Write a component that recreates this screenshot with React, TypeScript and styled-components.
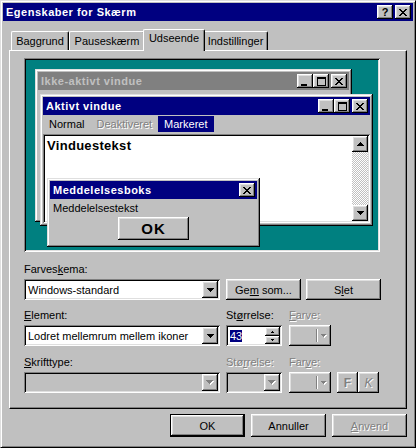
import React from 'react';
import styled, { createGlobalStyle, css } from 'styled-components';

const GlobalStyle = createGlobalStyle`
  html, body {
    margin: 0;
    padding: 0;
    background: #c0c0c0;
  }
  body {
    font-family: "Liberation Sans", Arial, sans-serif;
    font-size: 11px;
    color: #000;
  }
  * {
    box-sizing: border-box;
  }
`;

const raised = css`
  background: #c0c0c0;
  box-shadow: inset -1px -1px #000, inset 1px 1px #fff, inset -2px -2px #808080, inset 2px 2px #dfdfdf;
`;

const sunken = css`
  box-shadow: inset 1px 1px #808080, inset -1px -1px #fff, inset 2px 2px #000, inset -2px -2px #dfdfdf;
`;

const disabledText = css`
  color: #808080;
  text-shadow: 1px 1px 0 #fff;
`;

/* ---------- pixel glyphs ---------- */

const CLOSE = ['##....##', '.##..##.', '..####..', '...##...', '..####..', '.##..##.', '##....##'];
const MINIMIZE = ['.........', '.........', '.........', '.........', '.........', '.........', '.........', '######...', '######...'];
const MAXIMIZE = ['#########', '#########', '#.......#', '#.......#', '#.......#', '#.......#', '#.......#', '#.......#', '#########'];
const DOWN = ['#######', '.#####.', '..###..', '...#...'];
const UP = ['...#...', '..###..', '.#####.', '#######'];
const TINY_DOWN = ['#####', '.###.', '..#..'];
const SPIN_UP = ['.#.', '###'];
const SPIN_DOWN = ['###', '.#.'];

const GlyphSvg = styled.svg`
  display: block;
  flex: none;
`;

type GlyphProps = { rows: string[]; etched?: boolean };

function Glyph({ rows, etched }: GlyphProps) {
  const cells: [number, number][] = [];
  rows.forEach((r, y) => [...r].forEach((c, x) => { if (c === '#') cells.push([x, y]); }));
  const pad = etched ? 1 : 0;
  return (
    <GlyphSvg width={rows[0].length + pad} height={rows.length + pad} shapeRendering="crispEdges">
      {etched && cells.map(([x, y]) => <rect key={`s${x}-${y}`} x={x + 1} y={y + 1} width={1} height={1} fill="#fff" />)}
      {cells.map(([x, y]) => <rect key={`${x}-${y}`} x={x} y={y} width={1} height={1} fill={etched ? '#808080' : '#000'} />)}
    </GlyphSvg>
  );
}

/* ---------- dialog frame ---------- */

const Window = styled.div`
  width: 416px;
  height: 448px;
  overflow: hidden;
  background: #c0c0c0;
  border: 1px solid;
  border-color: #dfdfdf #000 #000 #dfdfdf;
  box-shadow: inset 1px 1px #fff, inset -1px -1px #808080;
  padding: 2px;
  display: flex;
  flex-direction: column;
`;

const TitleBar = styled.div<{ $inactive?: boolean }>`
  height: 18px;
  flex: none;
  display: flex;
  align-items: center;
  padding: 0 2px 0 3px;
  background: ${p => (p.$inactive ? '#808080' : '#000080')};
  color: ${p => (p.$inactive ? '#c0c0c0' : '#fff')};
  font-weight: bold;
  letter-spacing: 0.5px;
  white-space: nowrap;
`;

const TitleText = styled.span`
  flex: 1;
  overflow: hidden;
`;

const CaptionButton = styled.div<{ $gap?: boolean }>`
  ${raised};
  width: 16px;
  height: 14px;
  flex: none;
  margin-left: ${p => (p.$gap ? 2 : 0)}px;
  display: flex;
  align-items: center;
  justify-content: center;
  color: #000;
  font-size: 11px;
  font-weight: bold;
  letter-spacing: 0;
  line-height: 1;
  padding-top: 1px;
`;

const Body = styled.div`
  flex: 1;
  display: flex;
  flex-direction: column;
  padding: 8px 6px 0 6px;
`;

/* ---------- tabs ---------- */

const TabStrip = styled.div`
  height: 21px;
  display: flex;
  align-items: flex-end;
  padding-left: 2px;
  position: relative;
  z-index: 2;
`;

const Tab = styled.div<{ $w: number; $active?: boolean }>`
  width: ${p => p.$w}px;
  height: ${p => (p.$active ? 22 : 19)}px;
  margin: 0 ${p => (p.$active ? -2 : 0)}px ${p => (p.$active ? -1 : 0)}px;
  padding-top: ${p => (p.$active ? 2 : 3)}px;
  background: #c0c0c0;
  border-top: 1px solid #fff;
  border-left: 1px solid #fff;
  border-right: 1px solid #000;
  border-radius: 2px 2px 0 0;
  box-shadow: inset -1px 0 #808080;
  text-align: center;
  line-height: 13px;
  position: relative;
  z-index: ${p => (p.$active ? 1 : 0)};
`;

const Panel = styled.div`
  height: 359px;
  flex: none;
  border: 1px solid;
  border-color: #fff #000 #000 #fff;
  box-shadow: inset -1px -1px #808080;
  padding: 7px 0 0 14px;
`;

/* ---------- appearance preview ---------- */

const Preview = styled.div`
  ${sunken};
  width: 356px;
  height: 194px;
  padding: 2px;
`;

const Desktop = styled.div`
  position: relative;
  width: 100%;
  height: 100%;
  background: #008080;
  overflow: hidden;
`;

const MiniWindow = styled.div<{ $x: number; $y: number; $w: number; $h: number }>`
  position: absolute;
  left: ${p => p.$x}px;
  top: ${p => p.$y}px;
  width: ${p => p.$w}px;
  height: ${p => p.$h}px;
  background: #c0c0c0;
  padding: 3px;
  box-shadow: inset -1px -1px #000, inset 1px 1px #dfdfdf, inset -2px -2px #808080, inset 2px 2px #fff;
  display: flex;
  flex-direction: column;
`;

const MenuBar = styled.div`
  height: 19px;
  flex: none;
  display: flex;
  align-items: flex-start;
  padding-top: 1px;
`;

const MenuItem = styled.div<{ $state?: 'disabled' | 'selected' }>`
  height: 16px;
  line-height: 16px;
  padding: 0 6px;
  ${p => p.$state === 'disabled' && disabledText};
  ${p => p.$state === 'selected' && css`
    background: #000080;
    color: #fff;
  `};
`;

const ClientArea = styled.div`
  ${sunken};
  flex: 1;
  background: #fff;
  padding: 2px;
  display: flex;
`;

const WindowText = styled.div`
  flex: 1;
  padding: 2px 0 0 2px;
  font-size: 13px;
  font-weight: bold;
  letter-spacing: 0.3px;
  line-height: 16px;
`;

const ScrollBar = styled.div`
  width: 16px;
  display: flex;
  flex-direction: column;
`;

const ScrollButton = styled.div`
  ${raised};
  width: 16px;
  height: 16px;
  display: flex;
  align-items: center;
  justify-content: center;
`;

const ScrollTrack = styled.div`
  flex: 1;
  background: repeating-conic-gradient(#c0c0c0 0 25%, #fff 0 50%) 0 0 / 2px 2px;
`;

const MessageText = styled.div`
  margin-top: 3px;
  padding-left: 3px;
  line-height: 13px;
`;

const MessageOk = styled.div`
  ${raised};
  align-self: center;
  width: 71px;
  height: 23px;
  margin-top: 2px;
  display: flex;
  align-items: center;
  justify-content: center;
  font-size: 15px;
  font-weight: bold;
  letter-spacing: 1px;
`;

/* ---------- form controls ---------- */

const Row = styled.div<{ $top: number }>`
  display: flex;
  align-items: flex-end;
  margin-top: ${p => p.$top}px;
`;

const Field = styled.div<{ $w: number; $gap?: number }>`
  width: ${p => p.$w}px;
  margin-left: ${p => p.$gap ?? 0}px;
  display: flex;
  flex-direction: column;
`;

const Label = styled.div<{ $disabled?: boolean }>`
  height: 13px;
  line-height: 13px;
  margin-bottom: 3px;
  white-space: nowrap;
  ${p => p.$disabled && disabledText};
`;

const Combo = styled.div<{ $disabled?: boolean }>`
  ${sunken};
  height: 21px;
  padding: 2px;
  display: flex;
  align-items: center;
  background: ${p => (p.$disabled ? '#c0c0c0' : '#fff')};
`;

const ComboText = styled.div`
  flex: 1;
  padding-left: 2px;
  white-space: nowrap;
  overflow: hidden;
`;

const DropButton = styled.div`
  ${raised};
  width: 16px;
  height: 17px;
  flex: none;
  display: flex;
  align-items: center;
  justify-content: center;
`;

const Selection = styled.span`
  background: #000080;
  color: #fff;
  padding: 1px 0;
`;

const SpinColumn = styled.div`
  width: 15px;
  height: 17px;
  display: flex;
  flex-direction: column;
`;

const SpinButton = styled.div<{ $h: number }>`
  ${raised};
  height: ${p => p.$h}px;
  display: flex;
  align-items: center;
  justify-content: center;
`;

const ColorButton = styled.div`
  ${raised};
  height: 21px;
  display: flex;
  align-items: center;
  padding: 0 4px 0 4px;
`;

const Swatch = styled.div`
  flex: 1;
`;

const Separator = styled.div`
  width: 2px;
  height: 13px;
  margin-right: 3px;
  border-left: 1px solid #808080;
  border-right: 1px solid #fff;
`;

const StyleButton = styled.div<{ $gap?: number; $italic?: boolean }>`
  ${raised};
  ${disabledText};
  width: 21px;
  height: 21px;
  margin-left: ${p => p.$gap ?? 0}px;
  display: flex;
  align-items: center;
  justify-content: center;
  font-size: 12px;
  font-weight: ${p => (p.$italic ? 'normal' : 'bold')};
  font-style: ${p => (p.$italic ? 'italic' : 'normal')};
`;

const PushButton = styled.div<{ $w?: number; $h?: number; $gap?: number; $default?: boolean; $disabled?: boolean }>`
  ${raised};
  width: ${p => p.$w ?? 75}px;
  height: ${p => p.$h ?? 23}px;
  margin-left: ${p => p.$gap ?? 0}px;
  display: flex;
  align-items: center;
  justify-content: center;
  white-space: pre;
  ${p => p.$default && css`
    border: 1px solid #000;
  `};
  ${p => p.$disabled && disabledText};
`;

const Footer = styled.div`
  display: flex;
  justify-content: flex-end;
  gap: 6px;
  margin-top: 5px;
`;

export default function App() {
  return (
    <>
      <GlobalStyle />
      <Window>
        <TitleBar>
          <TitleText>Egenskaber for Skærm</TitleText>
          <CaptionButton>?</CaptionButton>
          <CaptionButton $gap><Glyph rows={CLOSE} /></CaptionButton>
        </TitleBar>

        <Body>
          <TabStrip>
            <Tab $w={58}>Baggrund</Tab>
            <Tab $w={76}>Pauseskærm</Tab>
            <Tab $w={62} $active>Udseende</Tab>
            <Tab $w={65}>Indstillinger</Tab>
          </TabStrip>

          <Panel>
            <Preview>
              <Desktop>
                <MiniWindow $x={9} $y={9} $w={317} $h={153}>
                  <TitleBar $inactive>
                    <TitleText>Ikke-aktivt vindue</TitleText>
                    <CaptionButton><Glyph rows={MINIMIZE} /></CaptionButton>
                    <CaptionButton><Glyph rows={MAXIMIZE} /></CaptionButton>
                    <CaptionButton $gap><Glyph rows={CLOSE} /></CaptionButton>
                  </TitleBar>
                </MiniWindow>

                <MiniWindow $x={14} $y={34} $w={333} $h={132}>
                  <TitleBar>
                    <TitleText>Aktivt vindue</TitleText>
                    <CaptionButton><Glyph rows={MINIMIZE} /></CaptionButton>
                    <CaptionButton><Glyph rows={MAXIMIZE} /></CaptionButton>
                    <CaptionButton $gap><Glyph rows={CLOSE} /></CaptionButton>
                  </TitleBar>
                  <MenuBar>
                    <MenuItem>Normal</MenuItem>
                    <MenuItem $state="disabled">Deaktiveret</MenuItem>
                    <MenuItem $state="selected">Markeret</MenuItem>
                  </MenuBar>
                  <ClientArea>
                    <WindowText>Vinduestekst</WindowText>
                    <ScrollBar>
                      <ScrollButton><Glyph rows={UP} /></ScrollButton>
                      <ScrollTrack />
                      <ScrollButton><Glyph rows={DOWN} /></ScrollButton>
                    </ScrollBar>
                  </ClientArea>
                </MiniWindow>

                <MiniWindow $x={21} $y={118} $w={213} $h={69}>
                  <TitleBar>
                    <TitleText>Meddelelsesboks</TitleText>
                    <CaptionButton><Glyph rows={CLOSE} /></CaptionButton>
                  </TitleBar>
                  <MessageText>Meddelelsestekst</MessageText>
                  <MessageOk>OK</MessageOk>
                </MiniWindow>
              </Desktop>
            </Preview>

            <Row $top={11}>
              <Field $w={196}>
                <Label>Farves<u>k</u>ema:</Label>
                <Combo>
                  <ComboText>Windows-standard</ComboText>
                  <DropButton><Glyph rows={DOWN} /></DropButton>
                </Combo>
              </Field>
              <PushButton $h={21} $gap={6}><span>Ge<u>m</u> som...</span></PushButton>
              <PushButton $h={21} $gap={5}><span>S<u>l</u>et</span></PushButton>
            </Row>

            <Row $top={9}>
              <Field $w={196}>
                <Label><u>E</u>lement:</Label>
                <Combo>
                  <ComboText>Lodret mellemrum mellem ikoner</ComboText>
                  <DropButton><Glyph rows={DOWN} /></DropButton>
                </Combo>
              </Field>
              <Field $w={56} $gap={6}>
                <Label>St<u>ø</u>rrelse:</Label>
                <Combo>
                  <ComboText><Selection>43</Selection></ComboText>
                  <SpinColumn>
                    <SpinButton $h={9}><Glyph rows={SPIN_UP} /></SpinButton>
                    <SpinButton $h={8}><Glyph rows={SPIN_DOWN} /></SpinButton>
                  </SpinColumn>
                </Combo>
              </Field>
              <Field $w={42} $gap={7}>
                <Label $disabled><u>F</u>arve:</Label>
                <ColorButton>
                  <Swatch />
                  <Separator />
                  <Glyph rows={TINY_DOWN} etched />
                </ColorButton>
              </Field>
            </Row>

            <Row $top={10}>
              <Field $w={196}>
                <Label><u>S</u>krifttype:</Label>
                <Combo $disabled>
                  <ComboText />
                  <DropButton><Glyph rows={DOWN} etched /></DropButton>
                </Combo>
              </Field>
              <Field $w={56} $gap={6}>
                <Label $disabled>Stø<u>r</u>relse:</Label>
                <Combo $disabled>
                  <ComboText />
                  <DropButton><Glyph rows={DOWN} etched /></DropButton>
                </Combo>
              </Field>
              <Field $w={42} $gap={7}>
                <Label $disabled>Far<u>v</u>e:</Label>
                <ColorButton>
                  <Swatch />
                  <Separator />
                  <Glyph rows={TINY_DOWN} etched />
                </ColorButton>
              </Field>
              <StyleButton $gap={6}>F</StyleButton>
              <StyleButton $italic>K</StyleButton>
            </Row>
          </Panel>

          <Footer>
            <PushButton $default>OK</PushButton>
            <PushButton>Annuller</PushButton>
            <PushButton $disabled><span><u>A</u>nvend</span></PushButton>
          </Footer>
        </Body>
      </Window>
    </>
  );
}
